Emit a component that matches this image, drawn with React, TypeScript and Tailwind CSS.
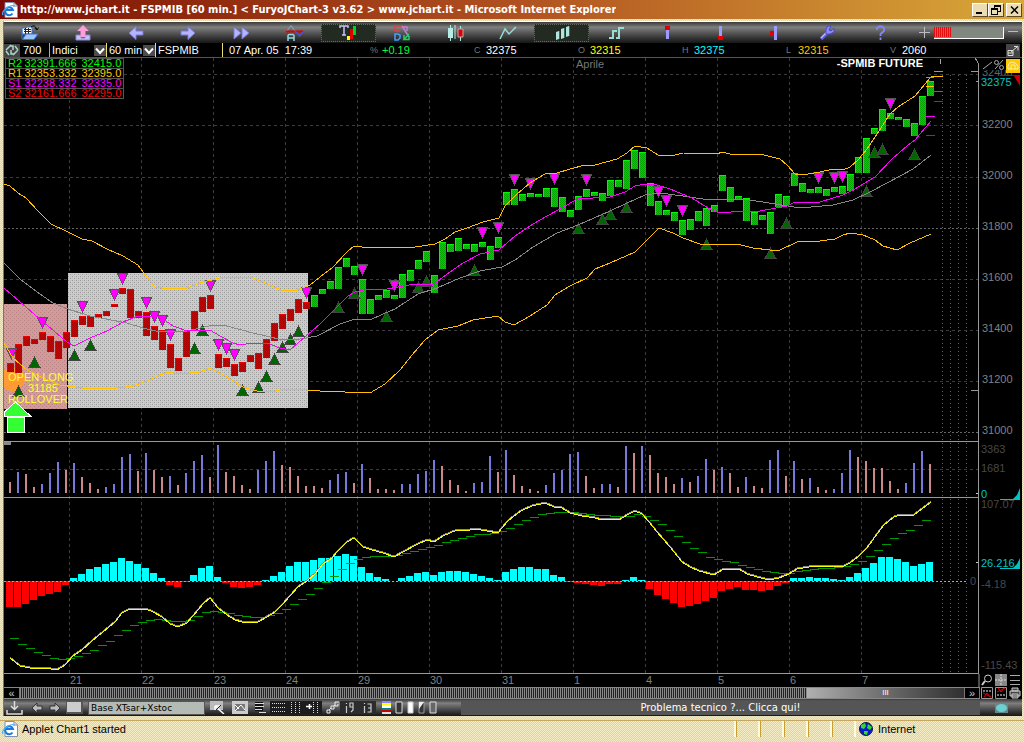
import React from "react";

/* ---------- market data (chart space, one bar every 8 units) ---------- */

const candles: [number, number][] = [
  [363, 372], [344, 373], [336, 346], [339, 344], [332, 340], [336, 352], [341, 359], [332, 348], [320, 337], [316, 325],
  [316, 327], [314, 318], [311, 316], [304, 307], [288, 294], [289, 318], [311, 318], [312, 336], [326, 340], [330, 350],
  [344, 368], [358, 371], [331, 357], [311, 330], [297, 312], [295, 309], [354, 368], [358, 367], [364, 376], [362, 372],
  [355, 362], [353, 369], [339, 358], [323, 341], [314, 329], [309, 321], [299, 313], [302, 309], [295, 307], [289, 294],
  [281, 289], [267, 289], [258, 267], [266, 275], [279, 314], [299, 314], [295, 300], [290, 298], [295, 299], [274, 298],
  [270, 281], [260, 269], [251, 262], [275, 293], [242, 269], [244, 252], [238, 251], [244, 249], [244, 252], [242, 247],
  [246, 260], [237, 248], [192, 205], [189, 205], [194, 201], [193, 197], [194, 197], [188, 197], [188, 207], [197, 212],
  [210, 217], [196, 210], [189, 197], [192, 196], [193, 201], [180, 196], [180, 187], [160, 189], [150, 169], [152, 178],
  [183, 206], [201, 215], [210, 215], [212, 221], [220, 235], [219, 230], [211, 221], [208, 226], [205, 212], [175, 191],
  [187, 202], [196, 200], [198, 221], [212, 225], [215, 220], [212, 234], [194, 207], [196, 205], [173, 186], [183, 192],
  [189, 193], [187, 193], [189, 196], [187, 192], [186, 194], [174, 191], [157, 173], [138, 173], [128, 134], [109, 131],
  [113, 119], [117, 120], [119, 127], [123, 136], [96, 125], [81, 96],
];
const FIRST_LONG = 38;

const volumes =
  "11r 21b 19r 6r 9b 20b 31b 23r 30b 16r 10r 4r 6b 9b 36b 39b 22r 40b 23r 16r 17b 8r 20b 32b 38b 16r 48b 21r 17r 8r 4r 23b 32b 42b 28r 26r 17r 7r 7r 5r 13b 19b 21b 10r 29b 15r 4r 4r 3r 9b 9b 19b 22b 33b 27r 13r 8r 2r 10b 11b 37b 21r 43b 18r 7r 4r 2r 8b 20b 23b 39b 41b 17r 5r 9b 9b 6r 47b 40r 47b 38r 20r 16r 9r 15b 11r 17b 34b 23r 26b 20r 6r 16b 7r 5r 33b 43b 17r 32b 14r 15b 6r 3r 4b 20b 43b 36r 32r 25r 25r 12r 4r 10b 30b 42b 29r".split(" ");

const histogram = [
  -26, -26, -23, -19, -15, -13, -11, -4, 3, 7, 12, 14, 17, 19, 23, 20, 17, 13, 8, 3, -4, -6, -1, 6, 13, 15, 4, -2, -6, -7,
  -6, -4, 1, 5, 9, 15, 19, 19, 21, 23, 23, 25, 27, 25, 14, 8, 4, 2, 0, 3, 5, 8, 9, 6, 9, 10, 10, 9, 7, 5, 3, 1, 9, 12, 14,
  14, 12, 12, 6, 4, -1, -2, -3, -4, -5, -3, -3, 1, 4, 1, -8, -14, -18, -22, -26, -25, -23, -20, -17, -10, -8, -6, -9, -9,
  -10, -9, -5, -2, 3, 3, 4, 3, 3, 2, 1, 4, 8, 13, 18, 24, 24, 22, 19, 15, 17, 19,
];

const signal = [
  638, 644, 648, 652, 655, 658, 659, 658, 656, 653, 650, 645, 641, 635, 630, 625, 622, 620, 619, 620, 621, 621, 620, 616,
  612, 611, 612, 613, 615, 616, 617, 617, 615, 613, 609, 604, 599, 594, 588, 582, 576, 569, 563, 559, 557, 556, 556, 556,
  555, 553, 551, 549, 547, 545, 542, 540, 538, 536, 534, 534, 533, 531, 528, 524, 520, 517, 514, 513, 512, 512, 512, 513,
  514, 515, 515, 516, 516, 516, 514, 516, 520, 524, 530, 536, 542, 548, 552, 557, 559, 561, 562, 565, 567, 569, 571, 572,
  573, 573, 571, 570, 569, 568, 568, 567, 566, 564, 561, 556, 550, 544, 538, 533, 530, 525, 520,
];

const momentum =
  "10,658 20,666 30,668 45,668 57,670 65,665 73,656 82,650 92,641 103,632 115,622 122,613 128,610 135,609 146,609 153,612 162,617 170,624 178,627 187,623 193,616 203,604 210,598 218,608 227,615 235,620 242,622 258,622 267,617 275,612 283,604 290,596 298,587 307,581 315,574 323,564 332,558 338,551 347,542 354,538 363,547 372,550 383,553 394,557 403,552 418,544 427,540 434,542 443,536 457,530 470,530 475,529 487,531 498,533 507,522 514,516 521,511 532,506 545,503 554,507 562,508 570,513 582,516 595,518 602,520 612,519 619,520 627,515 635,511 642,514 649,522 657,532 670,547 682,562 690,567 699,571 714,575 722,570 739,569 747,574 757,577 769,580 779,578 789,574 797,569 809,567 829,566 842,567 850,563 859,556 867,548 875,537 884,525 894,517 900,515 914,515 922,509 931,502";

const upperBand =
  "4,184 10,186 18,193 26,198 38,211 51,224 68,232 82,239 92,241 107,249 123,256 138,265 147,277 155,287 168,289 187,288 203,282 220,278 237,277 253,278 270,285 283,291 297,290 310,285 320,277 332,268 347,252 354,246 362,247 387,247 395,248 415,247 435,244 445,239 455,232 467,228 483,222 499,218 505,206 517,194 530,183 545,174 557,173 570,169 585,165 595,165 617,159 627,153 635,146 647,148 658,155 675,155 683,153 717,154 722,152 730,154 760,154 780,159 787,165 795,174 802,175 820,172 833,169 843,170 850,167 858,160 867,149 877,134 890,114 898,107 915,96 930,78 932,76 943,76";
const lowerBand =
  "4,343 13,358 27,370 43,378 60,385 90,389 117,388 133,386 147,381 167,372 180,374 200,372 210,368 227,377 243,387 257,391 273,392 283,389 308,390 320,391 370,393 385,384 400,370 412,355 425,340 438,330 458,326 473,320 498,316 505,322 514,325 530,316 547,305 555,295 570,286 587,278 595,269 610,263 635,252 647,240 659,228 673,233 683,238 700,244 713,245 737,244 753,248 770,250 780,250 797,242 820,241 835,239 843,235 850,233 863,235 875,240 883,246 897,250 910,243 931,234";
const fastAverage =
  "4,288 42,321 67,342 74,346 90,338 107,331 123,322 138,316 160,317 173,326 187,331 210,330 220,336 233,343 240,345 253,343 267,343 280,348 290,350 298,343 320,324 338,306 348,296 355,292 363,290 387,289 415,284 433,285 447,274 463,263 480,254 499,250 515,236 533,224 547,216 562,208 577,199 610,197 625,192 635,186 645,184 657,185 670,189 692,198 708,208 720,213 743,211 760,211 787,206 795,202 820,202 843,195 853,190 875,177 892,159 907,146 915,140 931,121";
const slowAverage =
  "4,263 20,279 37,292 53,303 68,309 90,316 127,323 143,328 160,332 187,331 213,325 227,326 253,333 283,340 300,339 317,336 340,324 355,319 370,320 383,314 395,309 418,294 437,288 460,278 480,271 502,267 515,260 533,247 557,233 578,225 610,211 627,203 645,195 660,193 683,196 703,199 743,199 763,202 800,208 833,205 853,200 870,192 887,183 913,169 931,155";

const sellMarks: [number, number][] = [
  [11, 348], [42, 317], [82, 301], [114, 289], [122, 273], [146, 297], [154, 311], [162, 315], [170, 329], [210, 280],
  [218, 339], [226, 343], [234, 349], [306, 287], [362, 264], [394, 280], [482, 227], [498, 222], [514, 174], [530, 178],
  [554, 173], [586, 174], [658, 186], [666, 195], [682, 205], [818, 172], [834, 172], [842, 171], [890, 98],
];
const buyMarks: [number, number][] = [
  [18, 386], [34, 357], [74, 350], [90, 340], [194, 343], [202, 325], [242, 385], [258, 382], [266, 371], [274, 354],
  [282, 342], [290, 334], [298, 326], [338, 302], [354, 288], [386, 311], [418, 282], [426, 276], [474, 265], [578, 223],
  [602, 214], [610, 209], [626, 202], [706, 239], [770, 248], [786, 218], [866, 186], [874, 147], [882, 144], [914, 149],
];

const days = [21, 22, 23, 24, 29, 30, 31, 1, 4, 5, 6, 7];
const dayX = (i: number) => 69.5 + 72 * i;

const levels = [
  { name: "R2", raw: "32391.666", price: "32415.0", color: "text-[#00ff00]" },
  { name: "R1", raw: "32353.332", price: "32395.0", color: "text-[#ffc800]" },
  { name: "S1", raw: "32238.332", price: "32335.0", color: "text-[#ff00ff]" },
  { name: "S2", raw: "32161.666", price: "32295.0", color: "text-[#ff0000]" },
];

const quotes = [
  { tag: "%", name: "Change", value: "+0.19", color: "text-[#00ff40]" },
  { tag: "C", name: "Close", value: "32375", color: "text-white" },
  { tag: "O", name: "Open", value: "32315", color: "text-[#ffff00]" },
  { tag: "H", name: "High", value: "32375", color: "text-[#00ffff]" },
  { tag: "L", name: "Low", value: "32315", color: "text-[#ffc800]" },
  { tag: "V", name: "Volume", value: "2060", color: "text-white" },
];

/* ---------- icons ---------- */

type IconProps = { children: React.ReactNode; w?: number; h?: number };
const Icon = ({ children, w = 18, h = 16 }: IconProps) => (
  <svg width={w} height={h} viewBox={`0 0 ${w} ${h}`} fill="none" aria-hidden="true" className="block shrink-0">
    {children}
  </svg>
);

const rightArrow = "M1 6H8V1.500L15 8L8 14.500V10H1Z";

const tools: { label: string; active?: boolean; icon: React.ReactNode }[] = [
  {
    label: "Open",
    icon: (
      <Icon>
        <path d="M1 3H5L6 2H11V9H1Z" fill="#fff" stroke="#3a6fd0" />
        <path d="M3 4.500H10M3 6.500H10M4.500 3V9M7.500 3V9" stroke="#222" />
        <path d="M1 14V5M1.500 14.500L5 9H17L13 14.500Z" fill="#9cc8f8" stroke="#3a6fd0" />
        <path d="M10 2Q14 -1 15.500 4M13.500 3L16 5L17.500 2.500" stroke="#000" />
      </Icon>
    ),
  },
  {
    label: "Upload",
    icon: (
      <Icon>
        <path d="M2 10H7V13H11V10H16V15H2Z" fill="#c4c0ff" stroke="#8888cc" />
        <path d="M9 0L15 6H11.500V12H6.500V6H3Z" fill="#ff9cdc" />
      </Icon>
    ),
  },
  { label: "Back", icon: <Icon><path d={rightArrow} transform="translate(17 0) scale(-1 1)" fill="#b4b4ff" stroke="#7878d8" /></Icon> },
  { label: "Forward", icon: <Icon><path d={rightArrow} fill="#b4b4ff" stroke="#7878d8" /></Icon> },
  { label: "Fast forward", icon: <Icon><path d="M1 2L8 8L1 14ZM9 2L16 8L9 14Z" fill="#b4b4ff" stroke="#7878d8" /></Icon> },
  {
    label: "Annotate range",
    icon: (
      <Icon w={20}>
        <path d="M2 6L6 0.500L10 6" stroke="#7ab0d0" />
        <path d="M1 6.500H18" stroke="#e00000" strokeWidth="2" />
        <path d="M10 6L14.500 11L19 6" stroke="#5050d0" strokeWidth="1.500" />
        <path d="M3 16V10.500L4 9.500H8L9 10.500V16M3 13H9" stroke="#90d8e0" strokeWidth="1.500" />
      </Icon>
    ),
  },
  {
    label: "Text signals",
    active: true,
    icon: (
      <Icon>
        <path d="M1 3V1H9V3M5 1V10M3 10H7" stroke="#c4c4ff" strokeWidth="1.500" />
        <path d="M8 11H11V15H8Z" fill="#ffff00" />
        <path d="M11 4H14V14H11Z" fill="#e00000" />
        <path d="M14 1H17V10H14Z" fill="#00d020" />
      </Icon>
    ),
  },
  {
    label: "Indicators",
    icon: (
      <Icon>
        <path d="M8 1H2V6H7" stroke="#e04040" strokeWidth="1.500" />
        <path d="M2 9V15H5L7 13V10L5 9Z" stroke="#40a0ff" strokeWidth="1.500" />
        <path d="M9 2H14V6M9 1L16 12" stroke="#c080d0" strokeWidth="1.500" />
        <path d="M16 9L11 14.500H16V11M11 10V14" stroke="#20d060" strokeWidth="1.500" />
      </Icon>
    ),
  },
  {
    label: "Candles",
    icon: (
      <Icon>
        <path d="M4.500 0V16M9 0V14M14.500 1V16" stroke="#b0e8e0" />
        <path d="M2 3H7V13H2Z" fill="#b8ece4" />
        <path d="M12 4H17V12H12Z" fill="#e00000" stroke="#b0b0b0" />
      </Icon>
    ),
  },
  { label: "Line chart", icon: <Icon><path d="M1 14L6 4L10 9L17 2" stroke="#98dcd4" strokeWidth="1.500" /></Icon> },
  {
    label: "Bars",
    active: true,
    icon: (
      <Icon>
        <path d="M3 7L6 6V14L3 15ZM8 4L11 3V13L8 14ZM13 2L16 1V11L13 12Z" fill="#b0e4dc" />
        <path d="M6.500 6V14M11.500 3V13M16.500 1V11" stroke="#386860" />
      </Icon>
    ),
  },
  { label: "Step chart", icon: <Icon><path d="M2 13H6V6H10M9 13H12V3H17" stroke="#98dcd4" strokeWidth="2" /></Icon> },
  { label: "High marker", icon: <Icon><path d="M8.500 5V14" stroke="#9c9cff" strokeWidth="3" /><path d="M6 1H11V5H6Z" fill="#e00000" /></Icon> },
  { label: "Low marker", icon: <Icon><path d="M8.500 1V11" stroke="#9c9cff" strokeWidth="3" /><path d="M6 11H11V15H6Z" fill="#e00000" /></Icon> },
  { label: "Mid marker", icon: <Icon><path d="M10.500 1V15" stroke="#9c9cff" strokeWidth="3" /><path d="M5 6H9V10H5Z" fill="#e00000" /></Icon> },
  {
    label: "Settings",
    icon: (
      <Icon>
        <path d="M3 14L9 8" stroke="#5c5cf0" strokeWidth="3.500" />
        <path d="M3 13L9 7" stroke="#b8b8ff" strokeWidth="1.500" />
        <path d="M10 1L8 4V9H12L16 7V3L13 6L11 5L13 1Z" fill="#8c8cff" stroke="#4848d8" />
      </Icon>
    ),
  },
  { label: "Help", icon: <Icon><path d="M6 5V3L8 1.500H11L13 3V6L9.500 9V11M9.500 12.500V15" stroke="#8484ff" strokeWidth="1.800" /></Icon> },
];

const IePage = () => (
  <svg width="16" height="16" viewBox="0 0 16 16" fill="none" aria-hidden="true" className="block shrink-0">
    <path d="M3 0.500H12L15.500 4V15.500H3Z" fill="#fff" stroke="#8090b0" />
    <path d="M12 0.500V4H15.500" stroke="#8090b0" />
    <path d="M10.500 11.500A4 4 0 1 1 11 8H4" stroke="#1878e0" strokeWidth="2" />
    <path d="M1 13Q-1 10 6 5Q12 2 12 5" stroke="#40b0f8" strokeWidth="1.200" />
  </svg>
);

const Globe = () => (
  <svg width="14" height="14" viewBox="0 0 14 14" aria-hidden="true" className="block shrink-0">
    <circle cx="7" cy="7" r="6.500" fill="#0818d0" stroke="#101840" />
    <path d="M2 3L6 1L7 4L5 7L2 6ZM9 2L13 5L11 8L8 6ZM5 9L9 9L8 13L5 12Z" fill="#30d830" />
  </svg>
);

const DropArrow = () => (
  <svg width="12" height="11" viewBox="0 0 12 11" aria-hidden="true" className="pointer-events-none block shrink-0">
    <path d="M0 0H12V11H0Z" fill="#4c4c4c" />
    <path d="M2 3.500L6 8L10 3.500" fill="none" stroke="#fff" strokeWidth="2" />
  </svg>
);

/* ---------- chart ---------- */

const Chart = () => (
  <svg
    viewBox="4 58 1018 616"
    className="block h-auto w-full font-['Liberation_Sans',Arial,sans-serif] text-[11px]"
    role="img"
    aria-label="SPMIB future, 60 minute bars with volume and momentum"
  >
    <defs>
      <pattern id="greyDots" width="4" height="4" patternUnits="userSpaceOnUse">
        <path d="M0 0H4V4H0Z" fill="#cccccc" />
        <path d="M0 0H1V1H0ZM2 2H3V3H2Z" fill="#999999" />
        <path d="M2 0H3V1H2ZM0 2H1V3H0Z" fill="#b8b8b8" />
      </pattern>
      <pattern id="pinkDots" width="4" height="4" patternUnits="userSpaceOnUse">
        <path d="M0 0H4V4H0Z" fill="#cf9b9b" />
        <path d="M0 0H1V1H0ZM2 2H3V3H2Z" fill="#b88080" />
      </pattern>
      <pattern id="redFill" width="2" height="2" patternUnits="userSpaceOnUse">
        <path d="M0 0H2V2H0Z" fill="#d40000" />
        <path d="M0 0H1V1H0ZM1 1H2V2H1Z" fill="#b00000" />
      </pattern>
      <pattern id="greenFill" width="2" height="2" patternUnits="userSpaceOnUse">
        <path d="M0 0H2V2H0Z" fill="#00d000" />
        <path d="M0 0H1V1H0ZM1 1H2V2H1Z" fill="#00a800" />
      </pattern>
      <clipPath id="plot"><path d="M4 58H978V674H4Z" /></clipPath>
    </defs>

    <g shapeRendering="crispEdges" fill="none">
      <g stroke="#3c3c3c" strokeDasharray="3 3">
        {[74.5, 125.5, 279.5, 330.5, 381.5, 469.5].map((y) => <path key={y} d={`M4 ${y}H978`} />)}
        <path d="M4 177.500H978" />
        {days.map((_, i) => <path key={i} d={`M${dayX(i)} 58V674`} />)}
      </g>
      <path d="M4 228.500H978M4 432.500H978" stroke="#666" strokeDasharray="2 2" />
      <path d="M942.500 75V674M950.500 75V674M958.500 75V674M966.500 75V674" stroke="#666" strokeDasharray="1 3" />

      <path d="M68 273H308V408H68Z" fill="url(#greyDots)" />
      <path d="M4 304H67V409H4Z" fill="url(#pinkDots)" />
      <g clipPath="url(#plot)"><circle cx="13" cy="379" r="12" fill="#ff9933" /></g>

      {candles.map(([top, bottom], i) => (
        <g key={i}>
          <rect x={7 + i * 8} y={top} width="7" height={bottom - top} fill={i < FIRST_LONG ? "url(#redFill)" : "url(#greenFill)"} />
          <path d={`M${7.5 + i * 8} ${bottom}V${top + 0.5}H${14 + i * 8}`} stroke={i < FIRST_LONG ? "#f00000" : "#00f800"} />
        </g>
      ))}

      {buyMarks.map(([x, y], i) => (
        <path key={i} d={`M${x + 0.5} ${y}L${x + 6} ${y + 10.5}H${x - 5}Z`} fill="#006600" stroke="#444" />
      ))}
      {sellMarks.map(([x, y], i) => (
        <path key={i} d={`M${x - 4.5} ${y + 0.5}H${x + 5.5}L${x + 0.5} ${y + 11}Z`} fill="#ff00ff" stroke="#555" />
      ))}

      <polyline points={slowAverage} stroke="#888" />
      <polyline points={fastAverage} stroke="#ff00ff" />
      <polyline points={upperBand} stroke="#ffc000" />
      <polyline points={lowerBand} stroke="#ffc000" />

      <path d="M934 71.500H943M926 77.500H934" stroke="#00ff00" />
      <path d="M926 86.500H934" stroke="#ffc000" />
      <path d="M934 91.500H943M926 116.500H935" stroke="#ff00ff" />
      <path d="M934 101.500H943M926 135.500H935" stroke="#ff0000" />

      {volumes.map((v, i) => {
        const h = parseInt(v, 10);
        return <rect key={i} x={9 + i * 8} y={493 - h} width="2" height={h} fill={v.endsWith("b") ? "#7878dc" : "#cc8888"} />;
      })}
      {histogram.map((v, i) => (
        <rect key={i} x={6 + i * 8} y={v > 0 ? 581 - v : 581} width="7" height={Math.abs(v)} fill={v > 0 ? "#00ffff" : "#ff0000"} />
      ))}
      <path d="M4 581.500H968" stroke="#aaa" strokeDasharray="2 2" />
      <path d={signal.map((y, i) => `M${10 + i * 8} ${y + 0.5}h9`).join("")} stroke="#009900" />
      <polyline points={momentum} stroke="#888" transform="translate(0 -1)" />
      <polyline points={momentum} stroke="#ffff00" />

      <path d="M4 441.500H978M4 497.500H978M4 673.500H978" stroke="#999" />
      <path d="M978.500 63V674M978 62.500L975 58M971 71.500H978M976 81.500H978M971 390.500H978" stroke="#999" />
      <path d="M940.500 59V64" stroke="#aaa" />
      <path d="M4 442H11V445H4Z" fill="#888" />
      <path d="M976 493.500H978M976 562.500H978" stroke="#ccc" />
    </g>

    <g shapeRendering="crispEdges">
      <path d="M7.500 417H24.500V432.500H7.500Z" fill="#33ff33" stroke="#fff" />
      <path d="M15.500 402L31 416.500H4.500V412Z" fill="#33ff33" stroke="#fff" />
    </g>
    <g fill="#ffff33">
      <text x="8" y="381">OPEN LONG</text>
      <text x="28" y="392">31185</text>
      <text x="8" y="403">ROLLOVER</text>
    </g>

    <text x="576" y="68" fill="#777">Aprile</text>
    <text x="923" y="67" fill="#fff" textAnchor="end" fontWeight="bold">-SPMIB FUTURE</text>

    <g fill="#808080">
      <text x="982" y="76" fill="#666">32400</text>
      <text x="982" y="128">32200</text>
      <text x="982" y="179">32000</text>
      <text x="982" y="230">31800</text>
      <text x="982" y="281">31600</text>
      <text x="982" y="332">31400</text>
      <text x="982" y="383">31200</text>
      <text x="982" y="434">31000</text>
    </g>
    <g fill="#484848">
      <text x="981" y="453">3363</text>
      <text x="981" y="472">1681</text>
      <text x="981" y="508">107.07</text>
      <text x="970" y="585">0</text>
      <text x="981" y="588">-4.18</text>
      <text x="981" y="669">-115.43</text>
    </g>
    <path d="M980 58H1022V70H980ZM980 77H1022V88H980Z" fill="#000" />
    <g fill="#00c4c4">
      <text x="981" y="86">32375</text>
      <text x="981" y="498">0</text>
      <text x="981" y="567">26.216</text>
      <path d="M1020 488V500H1000V499H1013L1017 495ZM1020 558V569H1000V568H1013L1017 564Z" />
    </g>
    <path d="M1000 75H1020V86L1014 76H1000Z" fill="#cc0000" />
    <g fill="none" stroke="#aaa">
      <path d="M983 69L992 62" />
      <circle cx="996.500" cy="62.500" r="2" /><circle cx="1001.500" cy="67.500" r="2" /><path d="M995 69L1003 60" />
    </g>
    <path d="M1006 59H1020V73H1006Z" fill="#ffc800" />
    <path d="M1008 69H1018V66Q1016 62 1011 62L1008 65ZM1011 69V65H1015V69" fill="none" stroke="#fff0a0" />
  </svg>
);

const chrome = "bg-linear-to-b from-[#3a3a3a] via-[#808080] via-25% to-[#161616]";
const sand = "bg-[repeating-conic-gradient(#e8cfa0_0_25%,#f4ecc4_0_50%)] bg-size-[2px_2px]";

const windowButton = "flex h-[14px] w-4 items-center justify-center border border-t-white border-l-white border-r-[#604820] border-b-[#604820] bg-[#ecdcb4]";

export default function App() {
  return (
    <div className={`font-['Liberation_Sans',Arial,sans-serif] text-[11px] leading-3 ${sand}`}>
      <header className="flex h-[19px] items-center justify-between bg-linear-to-r from-[#7c0804] via-[#b05020] to-[#d8a838] pr-[2px] pl-[2px]">
        <h1 className="flex min-w-0 items-center gap-[2px] text-[11px] font-bold text-white">
          <IePage />
          <span className="truncate font-['DejaVu_Sans_Condensed','DejaVu_Sans',sans-serif]">
            http://www.jchart.it - FSPMIB [60 min.] &lt; FuryoJChart-3 v3.62 &gt; www.jchart.it - Microsoft Internet Explorer
          </span>
        </h1>
        <div className="flex shrink-0">
          <button aria-label="Minimize" className={windowButton}>
            <svg width="10" height="8" viewBox="0 0 10 8"><path d="M1 6H7V8H1Z" fill="#000" /></svg>
          </button>
          <button aria-label="Restore" className={windowButton}>
            <svg width="10" height="10" viewBox="0 0 10 10" fill="none" stroke="#000" shapeRendering="crispEdges">
              <path d="M3.500 3V0.500H9.500V6.500H7M3 1.500H10M0.500 3.500H6.500V9.500H0.500ZM0 4.500H7" />
            </svg>
          </button>
          <button aria-label="Close" className={`${windowButton} ml-[2px]`}>
            <svg width="9" height="8" viewBox="0 0 9 8"><path d="M1 0.500L8 7.500M8 0.500L1 7.500" stroke="#000" strokeWidth="1.500" /></svg>
          </button>
        </div>
      </header>

      <main className="mt-[2px] mr-[2px] ml-[3px] border-t border-l border-t-white border-l-[#777] bg-black text-white">
        <div role="toolbar" aria-label="Chart tools" className={`flex h-[21px] items-center ${chrome}`}>
          <div className="flex flex-1">
            {tools.map((t) => (
              <button
                key={t.label}
                aria-label={t.label}
                title={t.label}
                className={`flex h-[18px] flex-1 items-center justify-center ${t.active ? "border border-dotted border-[#666] bg-[#222a22]" : ""}`}
              >
                {t.icon}
              </button>
            ))}
          </div>
          <div className="flex w-[116px] items-center justify-end gap-1 pr-1">
            <button aria-label="Zoom in"><Icon w={11} h={11}><path d="M0 5.500H11M5.500 0V11" stroke="#bbb" /></Icon></button>
            <div className="h-3 w-[70px] border-r border-b border-white bg-[#808880]">
              <div className="h-[10px] w-[18px] bg-[repeating-linear-gradient(90deg,#e01010_0_1px,#808080_1px_2px)]" />
            </div>
            <button aria-label="Zoom out"><Icon w={10} h={11}><path d="M0 4.500H10" stroke="#bbb" /></Icon></button>
          </div>
        </div>

        <div className="flex h-[15px] items-center justify-between border-b border-[#555]">
          <form className="flex shrink-0 items-center" onSubmit={(e) => e.preventDefault()}>
            <button type="button" aria-label="Reload data" className="flex h-[13px] w-4 items-center justify-center bg-[#444]">
              <Icon w={14} h={12}>
                <path d="M1 6L5 2H8V6M5 1L8 3M13 6L9 10H6V6M9 11L6 9M10 2L13 6M1 7L4 11" stroke="#a8d4cc" strokeWidth="1.500" />
              </Icon>
            </button>
            <input aria-label="Bars" defaultValue="700" className="ml-[3px] h-[14px] w-[26px] bg-transparent text-[11px] leading-[14px] outline-none" />
            <label className="flex items-center border-l border-[#e0a050] pl-[2px]">
              <span className="sr-only">Market</span>
              <select className="h-[14px] w-[42px] appearance-none bg-black text-[11px] leading-[14px] text-white outline-none">
                <option>Indici</option>
              </select>
              <DropArrow />
            </label>
            <label className="flex items-center border-l border-[#e8e070] pl-[2px]">
              <span className="sr-only">Interval</span>
              <select className="h-[14px] w-[34px] appearance-none bg-black text-[11px] leading-[14px] text-white outline-none">
                <option>60 min</option>
              </select>
              <DropArrow />
            </label>
            <input aria-label="Symbol" defaultValue="FSPMIB" className="h-[14px] w-[68px] border-r border-l border-[#e8e070] bg-transparent pl-[2px] text-[11px] leading-[14px] outline-none" />
            <time className="ml-[6px] whitespace-pre">07 Apr. 05  17:39</time>
          </form>
          <dl className="flex flex-1 justify-end">
            {quotes.map((q) => (
              <div key={q.tag} className="flex w-[104px] items-center gap-1 translate-x-0">
                <dt className="w-2 text-[9px] text-[#777]" title={q.name}>{q.tag}</dt>
                <dd className={q.color}>{q.value}</dd>
              </div>
            ))}
          </dl>
          <button aria-label="Detach chart" className="mr-[2px] ml-3 flex h-[13px] w-[14px] items-center justify-center bg-[#444]">
            <Icon w={12} h={11}>
              <path d="M1 5.500H6V10.500H1ZM7 1.500H11V5.500M4 7L10 2M1 8H6" stroke="#ddd" />
            </Icon>
          </button>
        </div>

        <div className="relative">
          <Chart />
          <table className="absolute top-0 left-[1px] border-collapse bg-black leading-[9px]">
            <tbody>
              {levels.map((l) => (
                <tr key={l.name} className={`h-[10px] border border-[#555] ${l.color}`}>
                  <th scope="row" className="w-[19px] p-0 pl-[2px] text-left font-normal">{l.name}</th>
                  <td className="w-[57px] p-0">{l.raw}</td>
                  <td className="w-[42px] p-0">{l.price}</td>
                </tr>
              ))}
            </tbody>
          </table>
        </div>

        <div className="flex">
          <div className="min-w-0 flex-1">
            <svg viewBox="4 674 975 13" className="block h-auto w-full font-['Liberation_Sans',Arial,sans-serif] text-[11px]" role="img" aria-label="Dates">
              <path d="M978.500 674V687" stroke="#999" />
              {days.map((d, i) => <text key={d} x={dayX(i)} y="684" fill="#808080">{d}</text>)}
            </svg>
            <div className="flex h-3 items-stretch border-y border-[#888]">
              <button aria-label="Scroll back" className="w-4 border-r border-[#777] text-[#ccc] leading-[9px]">«</button>
              <div className="flex flex-1 bg-[repeating-linear-gradient(90deg,#888_0_1px,#222_1px_2px)]">
                <div className="flex-1" />
                <div className="flex w-[157px] items-center justify-center bg-linear-to-r from-[#b0b0b0] to-[#303030] text-[8px] text-white">III</div>
              </div>
              <button aria-label="Scroll forward" className="w-4 border-r border-l border-[#777] text-[#ccc] leading-[9px]">»</button>
            </div>
          </div>
          <div className="grid w-[42px] shrink-0 grid-cols-3 place-items-center">
            <button aria-label="Magnify"><Icon w={12} h={12}><circle cx="7" cy="4.500" r="3.500" stroke="#ccc" /><path d="M4 7L1 11" stroke="#ccc" strokeWidth="2" /></Icon></button>
            <button aria-label="Crosshair"><Icon w={12} h={12}><path d="M0 0H12V12H0Z" fill="#888" /><path d="M6 0V12M0 6H12" stroke="#ddd" strokeDasharray="2 1" /></Icon></button>
            <button aria-label="List"><Icon w={12} h={12}><path d="M1 1.500H11M1 6.500H11M1 10.500H11" stroke="#aaa" /></Icon></button>
            <button aria-label="Clear lower"><Icon w={12} h={12}><path d="M0.500 0.500H11.500V11.500H0.500Z" stroke="#999" /><path d="M2 4H10" stroke="#eee" strokeDasharray="2 1" /><path d="M3 10L6 6L9 10M2 6L10 10" stroke="#e00000" /></Icon></button>
            <button aria-label="Clear upper"><Icon w={12} h={12}><path d="M0.500 0.500H11.500V11.500H0.500Z" stroke="#999" /><path d="M2 8H10" stroke="#eee" strokeDasharray="2 1" /><path d="M3 1L6 5L9 1M2 5L10 1" stroke="#e00000" /></Icon></button>
            <button aria-label="Print"><Icon w={12} h={12}><path d="M3 1H9V4H3ZM1 4H11V9H1ZM3 7H9V11H3Z" fill="#444" stroke="#ccc" /></Icon></button>
          </div>
        </div>

        <div className={`flex h-[17px] items-center ${chrome}`}>
          <div role="toolbar" aria-label="Layout tools" className="flex shrink-0 items-center">
            <button aria-label="Save layout" className="ml-[2px]"><Icon w={17} h={14}><path d="M8.500 0V8M5 5L8.500 8.500L12 5M1 9V13H16V9" stroke="#ddd" strokeWidth="1.500" /></Icon></button>
            <button aria-label="Previous layout" className="ml-2"><Icon w={12} h={12}><path d="M11 4H6V1L1 6L6 11V8H11Z" fill="#bbb" stroke="#333" /></Icon></button>
            <button aria-label="Next layout" className="ml-[6px]"><Icon w={12} h={12}><path d="M1 4H6V1L11 6L6 11V8H1Z" fill="#bbb" stroke="#333" /></Icon></button>
            <button aria-label="Blank layout" className="ml-[5px]"><Icon w={17} h={13}><path d="M0 0H17V13H0Z" fill="#555" /><path d="M1 1H15V11H1Z" fill="#ccc" /></Icon></button>
            <input
              aria-label="Layout name"
              defaultValue="Base XTsar+Xstoc"
              className="ml-[5px] h-[14px] w-[117px] border border-[#555] bg-[#b4bab4] pl-[2px] font-['DejaVu_Sans',sans-serif] text-[9px] text-black outline-none"
            />
            <button aria-label="Edit layout" className="ml-[5px]"><Icon w={15} h={13}><path d="M0 0H13V9H0Z" fill="#bbb" /><path d="M5 5L14 13M5 5H10M5 5V9" stroke="#fff" strokeWidth="1.500" /><path d="M6 9L11 4" stroke="#222" /></Icon></button>
            <button aria-label="Lines" className="ml-[7px]"><Icon w={16} h={13}><path d="M0 0H16V13H0Z" fill="#ccc" /><path d="M3 3H13V10H3Z" fill="#777" /><path d="M3 10L9 4L13 9M3 4L7 8" stroke="#fff" /></Icon></button>
            <button aria-label="Properties" className="ml-[6px]"><Icon w={12} h={13}><path d="M1 1H9V10H1Z" fill="#111" /><path d="M1 2.500H10M1 5.500H10M1 8.500H8M5 11.500H12" stroke="#ddd" /></Icon></button>
            <button aria-label="Horizontal grid" className="ml-1 bg-[#1c1c1c]"><Icon w={17} h={13}><path d="M2 2.500H15M2 6.500H15M2 10.500H15" stroke="#ddd" strokeDasharray="1 1" /></Icon></button>
            <button aria-label="Vertical grid" className="bg-[#1c1c1c]"><Icon w={17} h={13}><path d="M4.500 1V13M8.500 1V13M12.500 1V13" stroke="#ddd" strokeDasharray="1 1" /></Icon></button>
            <button aria-label="Cursor grid" className="bg-[#1c1c1c]"><Icon w={18} h={13}><path d="M9.500 1V13M13.500 1V13" stroke="#ddd" strokeDasharray="1 1" /><path d="M2 5.500H8M5.500 3V8" stroke="#fff" strokeWidth="1.500" /></Icon></button>
            <button aria-label="Link points" className="ml-1"><Icon w={14} h={13}><path d="M1 9H4V12H1ZM5 5H8V8H5ZM13 1H9V5H12V3M3 9L5 7M8 5L9 4" stroke="#eee" /></Icon></button>
            <button aria-label="Indicator nine" className="bg-[#2c2c2c]"><Icon w={18} h={13}><path d="M6.500 2V3M6.500 5V12M13 6H10V2H13V9L11 11" stroke="#ccc" strokeWidth="1.200" /></Icon></button>
            <button aria-label="Indicator three" className="bg-[#2c2c2c]"><Icon w={18} h={13}><path d="M6.500 2V3M6.500 5V12M9.500 3H13V11H9.500M10 7H13" stroke="#ccc" strokeWidth="1.200" /></Icon></button>
            <button aria-label="Colors" className="ml-[6px]">
              <Icon w={9} h={13}><path d="M0 0H9V2H0Z" fill="#88f" /><path d="M0 2H9V4H0Z" fill="#ff0" /><path d="M0 4H9V7H0Z" fill="#fff" /><path d="M0 7H9V9H0Z" fill="#088" /><path d="M0 9H9V11H0Z" fill="#c00" /><path d="M0 11H9V13H0Z" fill="#ddd" /></Icon>
            </button>
            <button aria-label="Hollow" className="ml-1"><Icon w={8} h={13}><path d="M1 1H7V12H1Z" fill="#333" stroke="#ddd" /></Icon></button>
            <button aria-label="Solid" className="ml-1"><Icon w={7} h={13}><path d="M1 1H6V12H1Z" fill="#fff" stroke="#ccc" /></Icon></button>
            <button aria-label="Split" className="ml-1"><Icon w={7} h={13}><path d="M1 1H6V12H1Z" fill="#333" stroke="#999" /><path d="M1 1H6L1 8Z" fill="#eee" /></Icon></button>
            <button aria-label="Outline" className="ml-1"><Icon w={8} h={13}><path d="M1 1H7V12H1Z" fill="#666" stroke="#ddd" /></Icon></button>
          </div>
          <a href="#support" className="ml-6 flex h-[14px] flex-1 items-center justify-center bg-[#555] font-['DejaVu_Sans',sans-serif] text-[10px] text-white">
            Problema tecnico ?... Clicca qui!
          </a>
          <button aria-label="Connection" className="flex h-[14px] w-[42px] shrink-0 items-center justify-center">
            <Icon w={13} h={10}><path d="M0 0H13V10H0Z" fill="#688" /><ellipse cx="6.500" cy="5" rx="5.500" ry="4" fill="#6cd0d0" /></Icon>
          </button>
        </div>
      </main>

      <footer className="mt-1 flex h-[22px] items-start border-t border-[#c8a860] pl-[2px] text-black">
        <IePage />
        <p className="ml-1 flex-1 pt-[2px] whitespace-nowrap">Applet Chart1 started</p>
        <div className="flex h-4">
          {[0, 1, 2, 3, 4].map((n) => <div key={n} className="w-6 border-l-2 border-[#fffbe0]"><div className="h-4 border-l border-[#c8a030]" /></div>)}
        </div>
        <div className="flex h-4 w-[170px] items-center gap-[5px] border-l-2 border-[#fffbe0] pl-[3px]">
          <Globe />
          <span>Internet</span>
        </div>
      </footer>
    </div>
  );
}
